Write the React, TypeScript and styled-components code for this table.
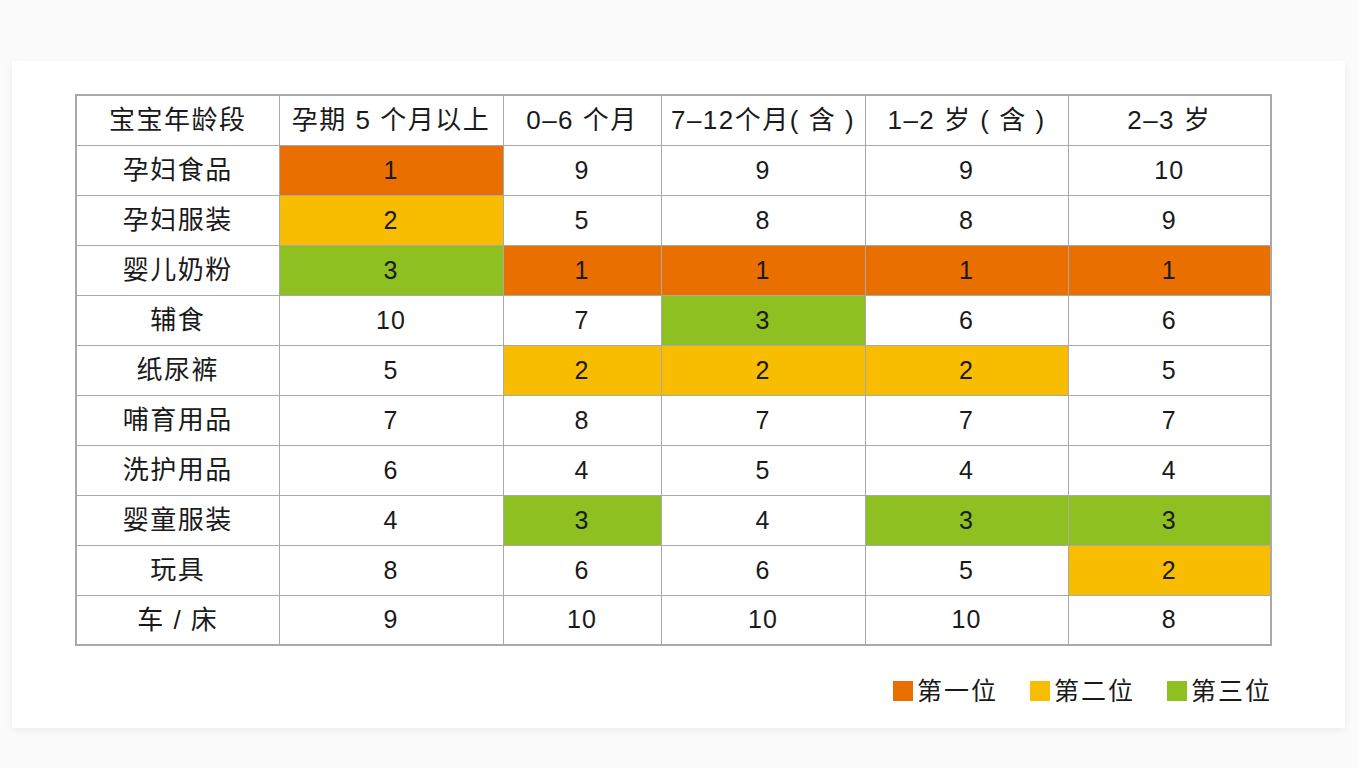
import React from 'react'
import styled, { createGlobalStyle } from 'styled-components'

type Rank = 1 | 2 | 3 | number

const RANK_COLORS: Record<number, string> = {
	1: '#e96f00',
	2: '#f8bd00',
	3: '#8ec022',
}

const COLUMNS = [
	{ label: '宝宝年龄段', width: 203 },
	{ label: '孕期 5 个月以上', width: 224 },
	{ label: '0–6 个月', width: 158 },
	{ label: '7–12个月( 含 )', width: 204 },
	{ label: '1–2 岁 ( 含 )', width: 203 },
	{ label: '2–3 岁', width: 203 },
]

const ROWS: { name: string; ranks: Rank[] }[] = [
	{ name: '孕妇食品', ranks: [1, 9, 9, 9, 10] },
	{ name: '孕妇服装', ranks: [2, 5, 8, 8, 9] },
	{ name: '婴儿奶粉', ranks: [3, 1, 1, 1, 1] },
	{ name: '辅食', ranks: [10, 7, 3, 6, 6] },
	{ name: '纸尿裤', ranks: [5, 2, 2, 2, 5] },
	{ name: '哺育用品', ranks: [7, 8, 7, 7, 7] },
	{ name: '洗护用品', ranks: [6, 4, 5, 4, 4] },
	{ name: '婴童服装', ranks: [4, 3, 4, 3, 3] },
	{ name: '玩具', ranks: [8, 6, 6, 5, 2] },
	{ name: '车 / 床', ranks: [9, 10, 10, 10, 8] },
]

const LEGEND = [
	{ rank: 1, label: '第一位' },
	{ rank: 2, label: '第二位' },
	{ rank: 3, label: '第三位' },
]

const GlobalStyle = createGlobalStyle`
	html, body {
		margin: 0;
		padding: 0;
		background: #fbfbfb;
	}
	body {
		font-family: 'Liberation Sans', 'Noto Sans CJK SC', sans-serif;
		color: #1a1a1a;
	}
`

export default function App() {
	return (
		<>
			<GlobalStyle />
			<Page>
				<Card>
					<RankTable>
						<colgroup>
							{COLUMNS.map((c) => (
								<col key={c.label} style={{ width: c.width }} />
							))}
						</colgroup>
						<thead>
							<tr>
								{COLUMNS.map((c) => (
									<HeadCell key={c.label}>{c.label}</HeadCell>
								))}
							</tr>
						</thead>
						<tbody>
							{ROWS.map((row) => (
								<tr key={row.name}>
									<NameCell>{row.name}</NameCell>
									{row.ranks.map((r, i) => (
										<RankCell key={i} $bg={RANK_COLORS[r]}>
											{r}
										</RankCell>
									))}
								</tr>
							))}
						</tbody>
					</RankTable>
					<Legend>
						{LEGEND.map((l) => (
							<LegendItem key={l.rank}>
								<Swatch $color={RANK_COLORS[l.rank]} />
								{l.label}
							</LegendItem>
						))}
					</Legend>
				</Card>
			</Page>
		</>
	)
}

const Page = styled.div`
	padding: 61px 14px 40px 12px;
`

const Card = styled.div`
	box-sizing: border-box;
	width: 1333px;
	height: 667px;
	background: #fff;
	box-shadow: 0 2px 8px rgba(0, 0, 0, 0.07);
	padding: 33px 74px 0 63px;
	display: flex;
	flex-direction: column;
`

const RankTable = styled.table`
	border-collapse: collapse;
	table-layout: fixed;
	width: 1195px;
	border: 2px solid #a9a9a9;
`

const Cell = styled.td`
	box-sizing: border-box;
	height: 50px;
	padding: 0;
	border: 1px solid #a9a9a9;
	text-align: center;
	vertical-align: middle;
	font-size: 25px;
	font-weight: 400;
	line-height: 1;
	white-space: nowrap;
	letter-spacing: 1px;
`

const HeadCell = styled(Cell).attrs({ as: 'th' })`
	font-size: 26px;
	font-weight: 400;
	letter-spacing: 1.5px;
`

const NameCell = styled(Cell)`
	font-size: 26px;
	letter-spacing: 1.5px;
`

const RankCell = styled(Cell)<{ $bg?: string }>`
	background: ${(p) => p.$bg || '#fff'};
`

const Legend = styled.div`
	width: 1197px;
	margin-top: 35px;
	display: flex;
	justify-content: flex-end;
	gap: 32px;
`

const LegendItem = styled.div`
	display: flex;
	align-items: center;
	gap: 4px;
	font-size: 25px;
	line-height: 20px;
	letter-spacing: 2px;
	color: #1a1a1a;
`

const Swatch = styled.span<{ $color: string }>`
	display: inline-block;
	width: 20px;
	height: 20px;
	background: ${(p) => p.$color};
`
